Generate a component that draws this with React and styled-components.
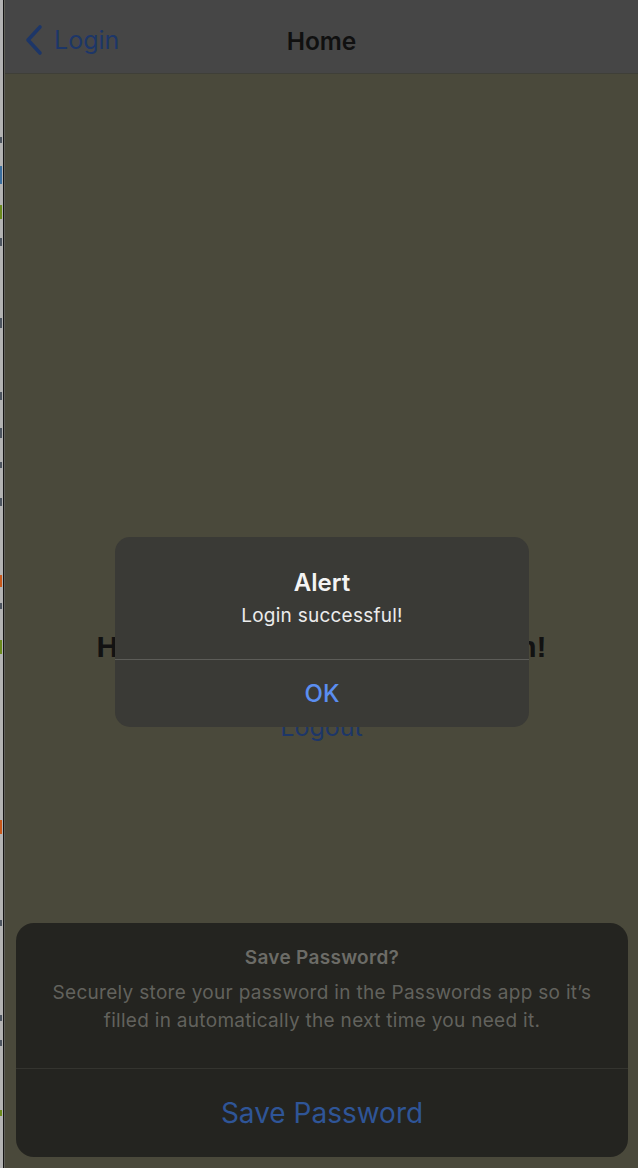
import React from 'react'
import styled, { createGlobalStyle } from 'styled-components'

const GlobalStyle = createGlobalStyle`
  html, body {
    margin: 0;
    padding: 0;
    background: #b3b3b3;
  }
  body {
    font-family: Inter, "Noto Sans", "Liberation Sans", sans-serif;
    -webkit-font-smoothing: antialiased;
  }
`

function ChevronLeft() {
  return (
    <svg width="22" height="32" viewBox="0 0 22 32" fill="none">
      <path
        d="M17 3 L5 16 L17 29"
        stroke="#1d3668"
        strokeWidth="3.6"
        strokeLinecap="round"
        strokeLinejoin="round"
      />
    </svg>
  )
}

const marks = [
  { top: 137, color: '#4d5560', h: 6 },
  { top: 166, color: '#3b6e9e', h: 18 },
  { top: 205, color: '#6b8a1e', h: 14 },
  { top: 238, color: '#4d5560', h: 8 },
  { top: 318, color: '#4d5560', h: 10 },
  { top: 392, color: '#4d5560', h: 8 },
  { top: 428, color: '#4d5560', h: 10 },
  { top: 462, color: '#4d5560', h: 6 },
  { top: 498, color: '#4d5560', h: 8 },
  { top: 575, color: '#c8581a', h: 12 },
  { top: 603, color: '#4d5560', h: 6 },
  { top: 640, color: '#6b8a1e', h: 14 },
  { top: 820, color: '#c8581a', h: 14 },
  { top: 920, color: '#4d5560', h: 6 },
  { top: 1015, color: '#4d5560', h: 6 },
  { top: 1040, color: '#4d5560', h: 6 },
  { top: 1110, color: '#6b8a1e', h: 6 },
]

export default function App() {
  return (
    <>
      <GlobalStyle />
      <Page>
        <Gutter>
          {marks.map((m, i) => (
            <Mark key={i} style={{ top: m.top, height: m.h, background: m.color }} />
          ))}
        </Gutter>
        <Screen>
          <NavBar>
            <BackButton>
              <ChevronLeft />
              <span>Login</span>
            </BackButton>
            <NavTitle>Home</NavTitle>
            <NavSpacer />
          </NavBar>
          <Content>
            <Greeting>Hello, you have been logged in!</Greeting>
            <LinkButton>Logout</LinkButton>
          </Content>

          <Alert>
            <AlertBody>
              <AlertTitle>Alert</AlertTitle>
              <AlertMessage>Login successful!</AlertMessage>
            </AlertBody>
            <AlertAction>OK</AlertAction>
          </Alert>

          <Sheet>
            <SheetBody>
              <SheetTitle>Save Password?</SheetTitle>
              <SheetText>
                Securely store your password in the Passwords app so it’s
                filled in automatically the next time you need it.
              </SheetText>
            </SheetBody>
            <SheetAction>Save Password</SheetAction>
          </Sheet>
        </Screen>
      </Page>
    </>
  )
}

const Page = styled.div`
  display: flex;
  width: 638px;
  height: 1168px;
  overflow: hidden;
`

const Gutter = styled.div`
  position: relative;
  width: 3px;
  background: #b3b3b3;
  border-right: 1px solid #141414;
  flex-shrink: 0;
`

const Mark = styled.div`
  position: absolute;
  left: 0;
  width: 2px;
`

const Screen = styled.div`
  position: relative;
  flex: 1;
  display: flex;
  flex-direction: column;
  background: #4a493b;
  border-left: 1px solid #5e5e57;
`

const NavBar = styled.div`
  height: 74px;
  display: flex;
  align-items: center;
  justify-content: space-between;
  padding: 7px 18px 0;
  background: #464646;
  border-bottom: 1px solid #3f3f38;
  box-sizing: border-box;
  flex-shrink: 0;
`

const BackButton = styled.div`
  display: flex;
  align-items: center;
  gap: 9px;
  width: 160px;
  color: #1d3668;
  font-size: 25px;
  font-weight: 400;
`

const NavTitle = styled.div`
  color: #101010;
  font-size: 24.5px;
  font-weight: 600;
  margin-top: 1px;
`

const NavSpacer = styled.div`
  width: 160px;
`

const Content = styled.div`
  flex: 1;
  display: flex;
  flex-direction: column;
  align-items: center;
  padding-top: 555px;
`

const Greeting = styled.div`
  color: #121212;
  font-family: "Liberation Sans", Arial, sans-serif;
  font-size: 30px;
  font-weight: 700;
  line-height: 36px;
`

const LinkButton = styled.div`
  margin-top: 47px;
  color: #1d3668;
  font-size: 25px;
  line-height: 30px;
`

const Alert = styled.div`
  position: absolute;
  left: 110px;
  top: 537px;
  width: 414px;
  height: 190px;
  border-radius: 15px;
  background: #3a3a36;
  display: flex;
  flex-direction: column;
  overflow: hidden;
`

const AlertBody = styled.div`
  height: 123px;
  display: flex;
  flex-direction: column;
  align-items: center;
  padding-top: 31px;
  box-sizing: border-box;
  border-bottom: 1px solid #5c5c58;
`

const AlertTitle = styled.div`
  color: #f4f4f4;
  font-size: 24px;
  font-weight: 600;
  line-height: 30px;
`

const AlertMessage = styled.div`
  margin-top: 6px;
  color: #ececec;
  font-size: 19px;
  letter-spacing: 0.25px;
  line-height: 24px;
`

const AlertAction = styled.div`
  flex: 1;
  display: flex;
  align-items: center;
  justify-content: center;
  color: #5b8ef0;
  font-size: 24px;
  font-weight: 500;
`

const Sheet = styled.div`
  position: absolute;
  left: 11px;
  bottom: 11px;
  width: 612px;
  height: 234px;
  border-radius: 18px;
  background: #242420;
  display: flex;
  flex-direction: column;
  overflow: hidden;
`

const SheetBody = styled.div`
  height: 146px;
  display: flex;
  flex-direction: column;
  align-items: center;
  padding: 23px 34px 0;
  box-sizing: border-box;
  border-bottom: 1px solid #34342f;
`

const SheetTitle = styled.div`
  color: #6c6c67;
  font-size: 19px;
  font-weight: 600;
  letter-spacing: 0.3px;
  line-height: 24px;
`

const SheetText = styled.div`
  margin-top: 9px;
  color: #62625d;
  font-size: 19px;
  letter-spacing: 0.3px;
  line-height: 28px;
  text-align: center;
`

const SheetAction = styled.div`
  flex: 1;
  display: flex;
  align-items: center;
  justify-content: center;
  color: #2f5597;
  font-size: 28px;
  font-weight: 400;
`
